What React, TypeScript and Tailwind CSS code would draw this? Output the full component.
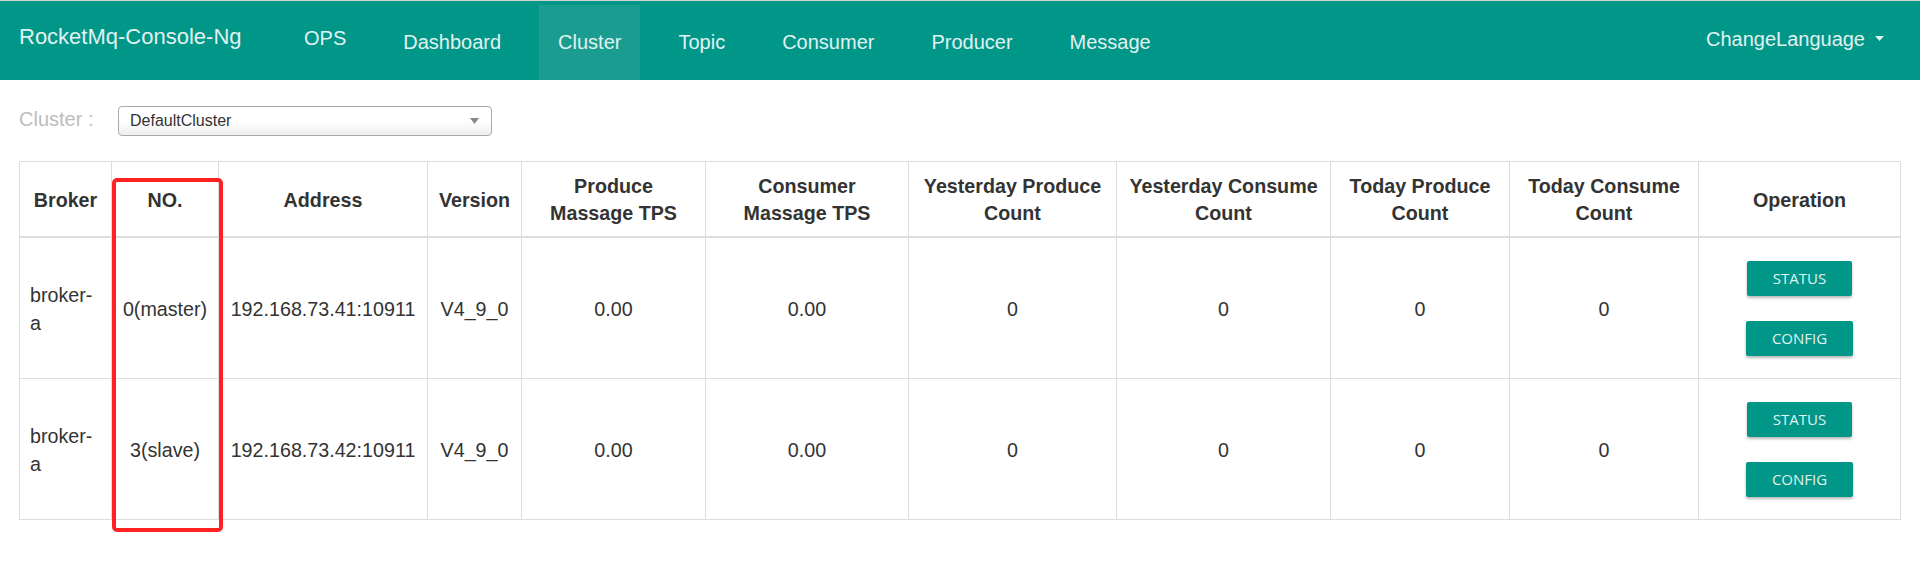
import React from "react";

const navItems = ["Dashboard", "Cluster", "Topic", "Consumer", "Producer", "Message"];

type Row = {
  broker: string;
  no: string;
  address: string;
  version: string;
  ptps: string;
  ctps: string;
  yp: string;
  yc: string;
  tp: string;
  tc: string;
};

const rows: Row[] = [
  {
    broker: "broker-a",
    no: "0(master)",
    address: "192.168.73.41:10911",
    version: "V4_9_0",
    ptps: "0.00",
    ctps: "0.00",
    yp: "0",
    yc: "0",
    tp: "0",
    tc: "0",
  },
  {
    broker: "broker-a",
    no: "3(slave)",
    address: "192.168.73.42:10911",
    version: "V4_9_0",
    ptps: "0.00",
    ctps: "0.00",
    yp: "0",
    yc: "0",
    tp: "0",
    tc: "0",
  },
];

const colWidths = [92, 107, 209, 94, 184, 203, 208, 214, 179, 189, 202];

function Btn({ label }: { label: string }) {
  return (
    <button className="flex h-[35px] items-center justify-center rounded-[2px] bg-[#009688] px-[26px] font-['Open_Sans',sans-serif] text-[15px] leading-none text-[#e0f2f1] shadow-[0_2px_3px_rgba(0,0,0,0.28)]">
      {label}
    </button>
  );
}

export default function App() {
  const th =
    "border border-b-2 border-[#dddddd] px-[10px] pt-[11px] pb-[9px] text-center align-middle font-bold";
  const td = "border border-[#dddddd] px-[10px] pt-[2px] text-center align-middle";
  return (
    <div className="h-[582px] w-[1920px] overflow-hidden bg-white font-['Liberation_Sans',Arial,sans-serif] text-[#333333]">
      <div className="h-px bg-[#d3d3d3]" />
      <nav className="flex h-[79px] bg-[#009688] pt-[4px] text-[20px] leading-[28px] text-[#e0f2f1]">
        <div className="w-[285px] shrink-0 pl-[19px] pt-[18px] text-[22px]">RocketMq-Console-Ng</div>
        <div className="flex gap-[19px]">
          <div className="px-[19px] pt-[19px]">OPS</div>
          {navItems.map((n) =>
            n === "Cluster" ? (
              <div key={n} className="bg-[#1a9d90] px-[19px] pt-[23px]">
                {n}
              </div>
            ) : (
              <div key={n} className="px-[19px] pt-[23px]">
                {n}
              </div>
            )
          )}
        </div>
        <div className="ml-auto flex items-start gap-[10px] pr-[36px] pt-[20px]">
          <span>ChangeLanguage</span>
          <svg width="9" height="5" viewBox="0 0 9 5" className="mt-[11px]">
            <path d="M0 0 L9 0 L4.5 5 Z" fill="#e0f2f1" />
          </svg>
        </div>
      </nav>

      <div className="flex items-start pl-[19px] pt-[25px]">
        <div className="w-[99px] text-[20px] leading-[28px] text-[#bdbdbd]">Cluster :</div>
        <div className="mt-[1px] flex h-[30px] w-[374px] items-center rounded-[4px] border border-[#aaaaaa] bg-linear-to-t from-[#eeeeee] to-white to-50% pl-[11px] pr-[12px] text-[16px] leading-[20px] text-[#333333]">
          <span>DefaultCluster</span>
          <svg width="9" height="6" viewBox="0 0 9 6" className="ml-auto">
            <path d="M0 0 L9 0 L4.5 6 Z" fill="#888888" />
          </svg>
        </div>
      </div>

      <div className="relative mx-[19px] mt-[25px]">
        <table className="w-[1882px] table-fixed border-collapse text-[19.7px] leading-[27px]">
          <colgroup>
            {colWidths.map((w, i) => (
              <col key={i} style={{ width: w }} />
            ))}
          </colgroup>
          <thead>
            <tr>
              <th className={th}>Broker</th>
              <th className={th}>NO.</th>
              <th className={th}>Address</th>
              <th className={th}>Version</th>
              <th className={th}>
                Produce
                <br />
                Massage TPS
              </th>
              <th className={th}>
                Consumer
                <br />
                Massage TPS
              </th>
              <th className={th}>
                Yesterday Produce
                <br />
                Count
              </th>
              <th className={th}>
                Yesterday Consume
                <br />
                Count
              </th>
              <th className={th}>
                Today Produce
                <br />
                Count
              </th>
              <th className={th}>
                Today Consume
                <br />
                Count
              </th>
              <th className={th}>Operation</th>
            </tr>
          </thead>
          <tbody className="leading-[28px]">
            {rows.map((r, i) => (
              <tr key={i}>
                <td className="border border-[#dddddd] px-[10px] pt-[2px] text-left align-middle">
                  <div className="w-[66px]">{r.broker}</div>
                </td>
                <td className={td}>{r.no}</td>
                <td className={td}>{r.address}</td>
                <td className={td}>{r.version}</td>
                <td className={td}>{r.ptps}</td>
                <td className={td}>{r.ctps}</td>
                <td className={td}>{r.yp}</td>
                <td className={td}>{r.yc}</td>
                <td className={td}>{r.tp}</td>
                <td className={td}>{r.tc}</td>
                <td className="border border-[#dddddd] px-[10px] py-[10px] align-middle">
                  <div className="flex flex-col items-center gap-[25px] pb-[12px] pt-[13px]">
                    <Btn label="STATUS" />
                    <Btn label="CONFIG" />
                  </div>
                </td>
              </tr>
            ))}
          </tbody>
        </table>
        <div className="pointer-events-none absolute left-[93px] top-[17px] h-[354px] w-[111px] rounded-[5px] border-[4px] border-[#ff2222]" />
      </div>
    </div>
  );
}
